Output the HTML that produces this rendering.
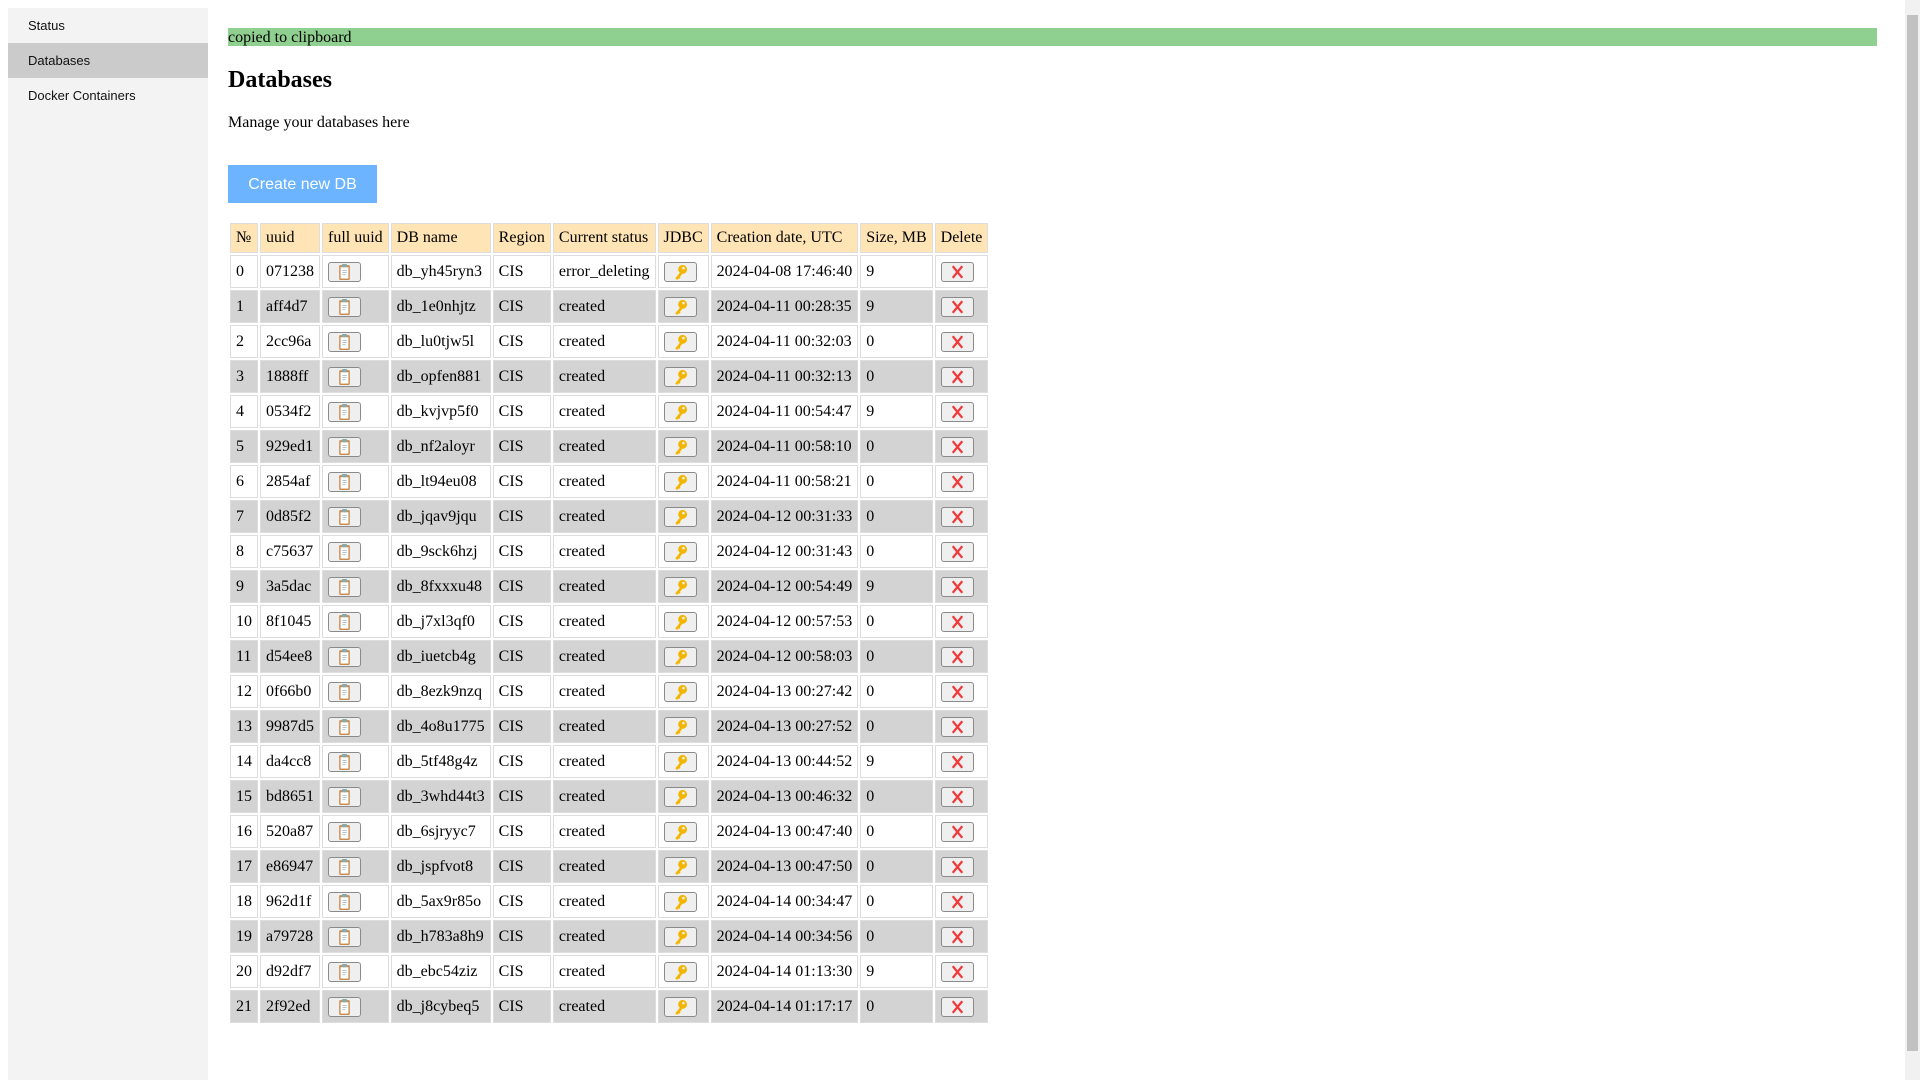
<!DOCTYPE html>
<html><head><meta charset="utf-8"><style>
html,body{margin:0;padding:0;width:1920px;height:1080px;overflow:hidden;background:#fff;font-family:"Liberation Serif",serif;}
.side{position:absolute;left:8px;top:8px;width:200px;height:1072px;background:#f3f3f3;font-family:"Liberation Sans",sans-serif;font-size:13px;color:#111;}
.side div{height:35px;line-height:35px;padding-left:20px;}
.side .act{background:#cbcbcb;}
.main{position:absolute;left:228px;top:28px;width:1649px;}
.note{background:#8fcf8f;height:18px;line-height:20px;font-size:16px;color:#000;}
h1{margin:0;position:absolute;top:37px;font-size:24px;font-weight:bold;line-height:30px;}
.p{position:absolute;top:86px;font-size:16px;line-height:18px;}
.btn{position:absolute;top:137px;left:0;width:149px;height:38px;background:#6cb4ff;color:#fff;font-family:"Liberation Sans",sans-serif;font-size:16px;line-height:39px;text-align:center;}
table{position:absolute;top:193px;left:0;border-spacing:2px;font-size:16px;}
td,th{border:1px solid #ddd;padding:0 5px;height:31px;text-align:left;font-weight:normal;white-space:nowrap;}
th{background:#ffe4b5;height:28px;}
tr.g td{background:#d3d3d3;}
.b{display:inline-block;width:31px;height:18px;border:1px solid #8a8a8a;border-radius:3px;background:#efefef;vertical-align:middle;position:relative;}
.b svg{position:absolute;left:7px;top:0px;}
.sb{position:absolute;left:1905px;top:0;width:15px;height:1080px;background:#f1f1f1;}
.sb .t{position:absolute;left:2px;top:15px;width:11px;height:1036px;background:#c1c1c1;}
</style></head><body>
<div class="side"><div>Status</div><div class="act">Databases</div><div>Docker Containers</div></div>
<div class="main">
<div class="note">copied to clipboard</div>
<h1>Databases</h1>
<div class="p">Manage your databases here</div>
<div class="btn">Create new DB</div>
<table id="t">
<tr><th>№</th><th>uuid</th><th>full uuid</th><th>DB name</th><th>Region</th><th>Current status</th><th>JDBC</th><th>Creation date, UTC</th><th>Size, MB</th><th>Delete</th></tr>
</table>
</div>
<div class="sb"><div class="t"></div></div>
<script>
var d=[["071238","db_yh45ryn3","error_deleting","2024-04-08 17:46:40",9],["aff4d7","db_1e0nhjtz","created","2024-04-11 00:28:35",9],["2cc96a","db_lu0tjw5l","created","2024-04-11 00:32:03",0],["1888ff","db_opfen881","created","2024-04-11 00:32:13",0],["0534f2","db_kvjvp5f0","created","2024-04-11 00:54:47",9],["929ed1","db_nf2aloyr","created","2024-04-11 00:58:10",0],["2854af","db_lt94eu08","created","2024-04-11 00:58:21",0],["0d85f2","db_jqav9jqu","created","2024-04-12 00:31:33",0],["c75637","db_9sck6hzj","created","2024-04-12 00:31:43",0],["3a5dac","db_8fxxxu48","created","2024-04-12 00:54:49",9],["8f1045","db_j7xl3qf0","created","2024-04-12 00:57:53",0],["d54ee8","db_iuetcb4g","created","2024-04-12 00:58:03",0],["0f66b0","db_8ezk9nzq","created","2024-04-13 00:27:42",0],["9987d5","db_4o8u1775","created","2024-04-13 00:27:52",0],["da4cc8","db_5tf48g4z","created","2024-04-13 00:44:52",9],["bd8651","db_3whd44t3","created","2024-04-13 00:46:32",0],["520a87","db_6sjryyc7","created","2024-04-13 00:47:40",0],["e86947","db_jspfvot8","created","2024-04-13 00:47:50",0],["962d1f","db_5ax9r85o","created","2024-04-14 00:34:47",0],["a79728","db_h783a8h9","created","2024-04-14 00:34:56",0],["d92df7","db_ebc54ziz","created","2024-04-14 01:13:30",9],["2f92ed","db_j8cybeq5","created","2024-04-14 01:17:17",0]];
var clip='<span class="b"><svg width="17" height="18" viewBox="0 0 16 17"><rect x="3" y="2" width="10" height="14" rx="1" fill="#c98a4b"/><rect x="4.3" y="4" width="7.4" height="10.7" fill="#fff"/><rect x="5.5" y="1" width="5" height="3" rx="1" fill="#8aa"/><path d="M6 7h4M6 9h4M6 11h3" stroke="#abc" stroke-width="0.8"/></svg></span>';
var key='<span class="b"><svg width="17" height="18" viewBox="0 0 16 17"><circle cx="10" cy="6" r="4.2" fill="#f2b600"/><circle cx="10.8" cy="4.8" r="1.2" fill="#efefef"/><path d="M8 8.5 L3 14.5 L5 16 L6 14.5 L7 15 L8 13.5 L7.5 13 L10.3 9.6" fill="#f2b600"/></svg></span>';
var x='<span class="b"><svg width="17" height="18" viewBox="0 0 16 17"><path d="M3.5 3L12.5 14M12.5 3L3.5 14" stroke="#ef3b3b" stroke-width="2.2"/></svg></span>';
var h='';
for(var i=0;i<d.length;i++){var r=d[i];h+='<tr'+(i%2?' class="g"':'')+'><td>'+i+'</td><td>'+r[0]+'</td><td>'+clip+'</td><td>'+r[1]+'</td><td>CIS</td><td>'+r[2]+'</td><td>'+key+'</td><td>'+r[3]+'</td><td>'+r[4]+'</td><td>'+x+'</td></tr>';}
document.getElementById('t').insertAdjacentHTML('beforeend',h);
</script>
</body></html>
